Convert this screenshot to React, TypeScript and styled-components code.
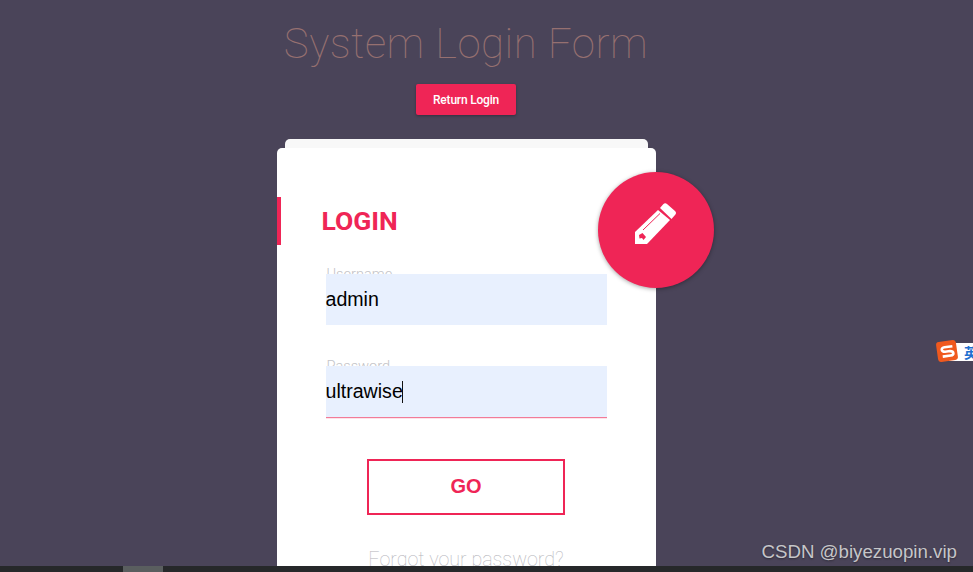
import styled, { createGlobalStyle } from 'styled-components';

const GlobalStyle = createGlobalStyle`
  html, body {
    margin: 0;
    padding: 0;
    height: 100%;
    overflow: hidden;
    background: #4a4459;
  }
`;

const Page = styled.div`
  position: relative;
  height: 572px;
  display: flex;
  flex-direction: column;
  overflow: hidden;
  background: #4a4459;
  font-family: Roboto, 'Liberation Sans', sans-serif;
`;

const Content = styled.main`
  flex: 1;
  min-height: 0;
  width: 932px;
  display: flex;
  flex-direction: column;
  align-items: center;
  overflow: hidden;

  > * {
    flex: none;
  }
`;

const Title = styled.h1`
  margin: 19px 0 0;
  font-size: 42px;
  line-height: 50px;
  font-weight: 100;
  letter-spacing: 0.5px;
  color: #967070;
`;

const ReturnButton = styled.button`
  margin-top: 15px;
  width: 100px;
  height: 31px;
  padding: 0;
  border: 0;
  border-radius: 2px;
  background: #ef2556;
  color: #fff;
  font-family: inherit;
  font-size: 12px;
  font-weight: 500;
  letter-spacing: -0.2px;
  box-shadow: 0 1px 3px rgba(0, 0, 0, 0.3);
`;

const CardStack = styled.div`
  margin-top: 24px;
  width: 379px;
  display: flex;
  flex-direction: column;
  align-items: center;
`;

const BackCard = styled.div`
  width: 363px;
  height: 9px;
  border-radius: 5px 5px 0 0;
  background: #f8f8f8;
`;

const Card = styled.section`
  position: relative;
  width: 100%;
  height: 420px;
  box-sizing: border-box;
  padding-top: 49px;
  border-radius: 5px 5px 0 0;
  background: #fff;
`;

const CardTitle = styled.h2`
  margin: 0;
  height: 48px;
  padding-left: 41px;
  border-left: 4px solid #ef2556;
  font-size: 26.5px;
  line-height: 48px;
  font-weight: 700;
  color: #ef2556;
`;

const Form = styled.form`
  margin-top: 29px;
  padding: 0 49px;
  display: flex;
  flex-direction: column;
`;

const Field = styled.div`
  position: relative;
  height: 92px;
`;

const FieldLabel = styled.label`
  position: absolute;
  left: 1px;
  top: -8px;
  font-size: 14.6px;
  line-height: 16px;
  font-weight: 300;
  color: #c4c4c8;
`;

const FieldInput = styled.div<{ $focused?: boolean }>`
  position: relative;
  height: 51px;
  background: #e8f0fe;
  box-shadow: ${(p) => (p.$focused ? '0 1px 0 #f27b98, 0 2px 0 #fde3e9' : 'none')};
  font-family: 'Liberation Sans', Arial, sans-serif;
  font-size: 19.6px;
  line-height: 51px;
  color: #000;
`;

const Caret = styled.span`
  display: inline-block;
  width: 1px;
  height: 22px;
  margin-left: -1px;
  vertical-align: -5px;
  background: #111;
`;

const GoButton = styled.button`
  align-self: center;
  margin-top: 1px;
  width: 198px;
  height: 56px;
  padding: 0 0 2px;
  border: 2px solid #ef2556;
  background: #fff;
  color: #ef2556;
  font-family: 'Liberation Sans', Arial, sans-serif;
  font-size: 20px;
  font-weight: 700;
`;

const ForgotLink = styled.a`
  margin-top: 33px;
  text-align: center;
  font-size: 19.7px;
  line-height: 24px;
  font-weight: 100;
  color: #b4b4ba;
`;

const Fab = styled.div`
  position: absolute;
  left: 321px;
  top: 24px;
  width: 116px;
  height: 116px;
  border-radius: 50%;
  display: flex;
  align-items: center;
  justify-content: center;
  background: #ef2556;
  box-shadow: 0 1px 4px rgba(0, 0, 0, 0.35);
`;

const FabIcon = styled.svg`
  width: 41px;
  height: 41px;
  margin: -14px 0 0 -1px;
  fill: #fff;
`;

const ScrollTrack = styled.div`
  flex: none;
  height: 6px;
  padding-left: 123px;
  background: #26282a;
`;

const ScrollThumb = styled.div`
  width: 40px;
  height: 100%;
  background: #5a5e5f;
`;

const ImeBadge = styled.div`
  position: absolute;
  right: 0;
  top: 343px;
  width: 24px;
  height: 18px;
  box-sizing: border-box;
  display: flex;
  align-items: center;
  padding-left: 15px;
  overflow: hidden;
  white-space: nowrap;
  background: #fff;
  font-family: 'Noto Sans CJK SC', sans-serif;
  font-size: 14px;
  font-weight: 700;
  color: #1f6fd0;
`;

const ImeLogo = styled.div`
  position: absolute;
  left: 937px;
  top: 341px;
  width: 20px;
  height: 20px;
  border-radius: 3px;
  display: flex;
  align-items: center;
  justify-content: center;
  transform: rotate(-8deg);
  background: #f0591e;
`;

const Watermark = styled.div`
  position: absolute;
  right: 16px;
  top: 541px;
  font-family: 'Liberation Sans', Arial, sans-serif;
  font-size: 18.7px;
  line-height: 22px;
  color: #c6c6c9;
  text-shadow: 0 1px 2px rgba(0, 0, 0, 0.4);
`;

function PencilIcon() {
  return (
    <FabIcon viewBox="0 0 41 41">
      <path d="M0 29 L23 7 L35 17 L12 41 L0 41 Z" />
      <path d="M25 5 L28 1.5 Q30 -0.5 32 1 L40 8 Q42 10 40 12 L36.5 16 Z" />
      <path d="M8 27 L25 10.5" stroke="#ef2556" strokeWidth="1" fill="none" />
      <path d="M4 32 L7.5 30 L11 34 L8.5 37 L7 35 L4.5 35.5 Z" fill="#ef2556" />
    </FabIcon>
  );
}

function App() {
  return (
    <Page>
      <GlobalStyle />
      <Content>
        <Title>System Login Form</Title>
        <ReturnButton>Return Login</ReturnButton>
        <CardStack>
          <BackCard />
          <Card>
            <CardTitle>LOGIN</CardTitle>
            <Form>
              <Field>
                <FieldLabel>Username</FieldLabel>
                <FieldInput>admin</FieldInput>
              </Field>
              <Field>
                <FieldLabel>Password</FieldLabel>
                <FieldInput $focused>
                  ultrawise
                  <Caret />
                </FieldInput>
              </Field>
              <GoButton type="button">GO</GoButton>
              <ForgotLink>Forgot your password?</ForgotLink>
            </Form>
            <Fab>
              <PencilIcon />
            </Fab>
          </Card>
        </CardStack>
      </Content>
      <ScrollTrack>
        <ScrollThumb />
      </ScrollTrack>
      <ImeBadge>英</ImeBadge>
      <ImeLogo>
        <svg width="15" height="13" viewBox="0 0 15 13" fill="none" stroke="#fff" strokeWidth="2.6">
          <path d="M13 2 H5 Q2 2 2 4 Q2 6 5 6.5 H10 Q13 7 13 9 Q13 11 10 11 H2" />
        </svg>
      </ImeLogo>
      <Watermark>CSDN @biyezuopin.vip</Watermark>
    </Page>
  );
}

export default App;
